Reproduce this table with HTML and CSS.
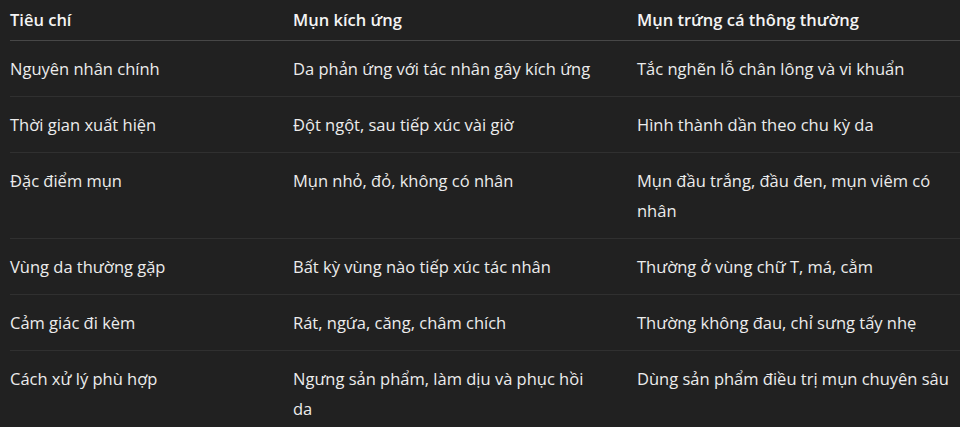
FILE: index.html
```html
<!DOCTYPE html>
<html lang="vi">
<head>
<meta charset="utf-8">
<link rel="stylesheet" href="styles.css">
</head>
<body>
<div class="wrap">
<table class="cmp">
<colgroup><col class="c1"><col class="c2"><col class="c3"></colgroup>
<thead>
<tr><th>Tiêu chí</th><th>Mụn kích ứng</th><th>Mụn trứng cá thông thường</th></tr>
</thead>
<tbody>
<tr><td>Nguyên nhân chính</td><td>Da phản ứng với tác nhân gây kích ứng</td><td>Tắc nghẽn lỗ chân lông và vi khuẩn</td></tr>
<tr><td>Thời gian xuất hiện</td><td>Đột ngột, sau tiếp xúc vài giờ</td><td>Hình thành dần theo chu kỳ da</td></tr>
<tr><td>Đặc điểm mụn</td><td>Mụn nhỏ, đỏ, không có nhân</td><td>Mụn đầu trắng, đầu đen, mụn viêm có nhân</td></tr>
<tr><td>Vùng da thường gặp</td><td>Bất kỳ vùng nào tiếp xúc tác nhân</td><td>Thường ở vùng chữ T, má, cằm</td></tr>
<tr><td>Cảm giác đi kèm</td><td>Rát, ngứa, căng, châm chích</td><td>Thường không đau, chỉ sưng tấy nhẹ</td></tr>
<tr><td>Cách xử lý phù hợp</td><td>Ngưng sản phẩm, làm dịu và phục hồi da</td><td>Dùng sản phẩm điều trị mụn chuyên sâu</td></tr>
</tbody>
</table>
</div>
</body>
</html>
```
FILE: styles.css
```css
html, body {
  margin: 0;
  padding: 0;
  background: #212121;
}
.wrap {
  padding: 0 0 0 10px;
}
.cmp {
  width: 950px;
  table-layout: fixed;
  border-collapse: collapse;
  font-family: "Open Sans", "Noto Sans", sans-serif;
  font-size: 16.5px;
  color: #ececec;
}
.c1 { width: 283px; }
.c2 { width: 344px; }
.c3 { width: 323px; }
.cmp th {
  text-align: left;
  font-weight: 600;
  line-height: 30px;
  padding: 5px 16px 5px 0;
  border-bottom: 1px solid #474747;
  color: #f4f4f4;
}
.cmp td {
  line-height: 30px;
  padding: 13px 34px 12px 0;
  border-bottom: 1px solid #303030;
  vertical-align: top;
}
.cmp td:last-child {
  padding-right: 0;
}
.cmp tbody tr:last-child td {
  border-bottom: none;
}
```
